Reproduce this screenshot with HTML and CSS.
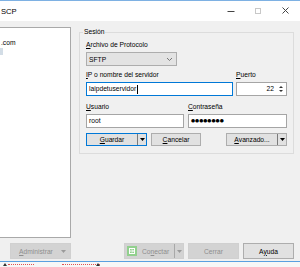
FILE: index.html
```html
<!DOCTYPE html>
<html lang="es">
<head>
<meta charset="utf-8">
<title>WinSCP</title>
<link rel="stylesheet" href="styles.css">
</head>
<body>
<div class="window">
  <div class="titlebar">
    <span class="title">SCP</span>
    <div class="caption">
      <span class="cbtn"><svg width="27" height="19" viewBox="0 0 27 19"><line x1="9.5" y1="9.5" x2="16.5" y2="9.5" stroke="#444" stroke-width="1"/></svg></span>
      <span class="cbtn"><svg width="27" height="19" viewBox="0 0 27 19"><rect x="10.5" y="6.5" width="5" height="5" fill="none" stroke="#c8c8c8" stroke-width="1"/></svg></span>
      <span class="cbtn"><svg width="27" height="19" viewBox="0 0 27 19"><path d="M10.5 5.5 L16.5 11.5 M16.5 5.5 L10.5 11.5" stroke="#444" stroke-width="1" fill="none"/></svg></span>
    </div>
  </div>
  <div class="client">
    <div class="main">
      <div class="tree">
        <div class="item">.com</div>
        <div class="item"><span class="selbar"></span></div>
      </div>
      <fieldset class="group">
        <legend>Sesión</legend>
        <div class="lbl"><u>A</u>rchivo de Protocolo</div>
        <div class="combo">
          <span>SFTP</span>
          <svg width="7" height="5" viewBox="0 0 7 5"><path d="M1 1 L3.5 3.5 L6 1" stroke="#777" stroke-width="1" fill="none"/></svg>
        </div>
        <div class="row r2">
          <div class="col ip">
            <div class="lbl"><u>I</u>P o nombre del servidor</div>
            <div class="input focus">laipdetuservidor<span class="caret"></span></div>
          </div>
          <div class="col port">
            <div class="lbl"><u>P</u>uerto</div>
            <div class="input num">
              <span class="val">22</span>
              <svg class="spin" width="8" height="12" viewBox="0 0 8 12"><path d="M2 5 L4 3 L6 5 Z M2 7 L4 9 L6 7 Z" fill="#333"/></svg>
            </div>
          </div>
        </div>
        <div class="row r3">
          <div class="col user">
            <div class="lbl"><u>U</u>suario</div>
            <div class="input">root</div>
          </div>
          <div class="col pass">
            <div class="lbl"><u>C</u>ontraseña</div>
            <div class="input dots">●●●●●●●●</div>
          </div>
        </div>
        <div class="row r4">
          <div class="btn split default guardar"><span class="bl"><u>G</u>uardar</span><span class="arr"><svg width="5" height="3" viewBox="0 0 5 3"><path d="M0 0 H5 L2.5 3 Z" fill="#000"/></svg></span></div>
          <div class="btn cancelar"><span class="bl"><u>C</u>ancelar</span></div>
          <div class="btn split avanzado"><span class="bl"><u>A</u>vanzado...</span><span class="arr"><svg width="5" height="3" viewBox="0 0 5 3"><path d="M0 0 H5 L2.5 3 Z" fill="#000"/></svg></span></div>
        </div>
      </fieldset>
    </div>
    <div class="actions">
      <div class="btn big disabled admin"><span class="bl"><u>A</u>dministrar</span><svg class="darr" width="5" height="3" viewBox="0 0 5 3"><path d="M0 0 H5 L2.5 3 Z" fill="#9a9a9a"/></svg></div>
      <div class="btn big disabled split conectar">
        <span class="bl">
          <svg class="ico" width="10" height="10" viewBox="0 0 10 10"><rect x="0" y="0" width="10" height="10" fill="#92d08e"/><rect x="2.5" y="2.5" width="5" height="5" fill="none" stroke="#fff" stroke-width="1"/><path d="M3 5 H6.5 M5 3.5 L6.5 5 L5 6.5" stroke="#fff" stroke-width="1" fill="none"/></svg>
          <span>Co<u>n</u>ectar</span>
        </span>
        <span class="arr"><svg width="5" height="3" viewBox="0 0 5 3"><path d="M0 0 H5 L2.5 3 Z" fill="#9a9a9a"/></svg></span>
      </div>
      <div class="btn big disabled cerrar"><span class="bl">Cerrar</span></div>
      <div class="btn big ayuda"><span class="bl">A<u>y</u>uda</span></div>
    </div>
  </div>
  <div class="strip">
    <span class="tri"></span><span class="red r1"></span><span class="red r2x"></span><span class="tri t2"></span>
  </div>
</div>
</body>
</html>
```
FILE: styles.css
```css
* { box-sizing: border-box; }
html, body { margin: 0; padding: 0; }
body {
  width: 300px;
  height: 267px;
  overflow: hidden;
  background: #fff;
  font-family: "Liberation Sans", Arial, sans-serif;
  font-size: 6.7px;
  color: #000;
}
u { text-decoration-thickness: 1px; text-underline-offset: 1px; }

.window {
  border-top: 1px solid #7eb1e3;
}
.titlebar {
  height: 20px;
  background: #fff;
  display: flex;
  align-items: center;
}
.title {
  font-size: 7.6px;
  margin-left: 1px;
  color: #000;
}
.caption {
  margin-left: auto;
  margin-right: 1px;
  display: flex;
}
.cbtn { width: 27px; height: 19px; display: block; }
.cbtn svg { display: block; }

.client {
  background: #f0f0f0;
  padding-top: 6px;
  border-bottom: 1px solid #5aa0e0;
  height: 241px;
}
.main {
  display: flex;
  align-items: flex-start;
}
.tree {
  width: 71px;
  height: 211px;
  background: #fff;
  border: 1px solid #a9a9a9;
  border-left: none;
  padding-top: 11px;
}
.item { height: 8px; line-height: 8px; white-space: nowrap; padding-left: 1px; }
.selbar { display: block; width: 3px; height: 7px; margin-top: 1px; margin-left: -1px; background: #d3dde6; }

.group {
  margin: 1px 0 0 8px;
  width: 215px;
  border: 1px solid #dcdcdc;
  padding: 5px 6px 7px 6px;
  min-width: 0;
}
.group legend {
  padding: 0 1px;
  margin-left: -3px;
  line-height: 8px;
  font-size: 6.7px;
}
.lbl { height: 8px; line-height: 8px; white-space: nowrap; }
.combo {
  margin-top: 3px;
  width: 91px;
  height: 14px;
  background: #e3e3e3;
  border: 1px solid #adadad;
  display: flex;
  align-items: center;
  justify-content: space-between;
  padding: 0 3px 0 2px;
}
.row { display: flex; }
.r2 { margin-top: 5px; gap: 3px; }
.r3 { margin-top: 7px; gap: 4px; }
.r4 { margin-top: 5px; }
.col { display: flex; flex-direction: column; gap: 3px; }
.ip { width: 147px; }
.port { width: 51px; }
.user { width: 98px; }
.pass { width: 99px; }
.input {
  height: 14px;
  background: #fff;
  border: 1px solid #a5a5a5;
  line-height: 12px;
  padding-left: 2px;
  display: flex;
  align-items: center;
  white-space: nowrap;
}
.input.focus { border-color: #0078d7; }
.caret { display: inline-block; width: 1px; height: 9px; background: #000; margin-left: 1px; }
.input.num { justify-content: flex-end; padding-right: 1px; }
.val { margin-right: 3px; }
.spin { display: block; }
.input.dots { font-size: 4.7px; letter-spacing: 0; font-family: "DejaVu Sans", sans-serif; }

.btn {
  height: 13px;
  background: #e1e1e1;
  border: 1px solid #adadad;
  display: flex;
  align-items: center;
  white-space: nowrap;
}
.btn .bl { flex: 1; text-align: center; display: flex; justify-content: center; align-items: center; }
.btn .arr {
  width: 9px;
  align-self: stretch;
  border-left: 1px solid #7a7a7a;
  display: flex;
  align-items: center;
  justify-content: center;
}
.btn .arr svg { display: block; }
.btn.default { border-color: #0078d7; }
.guardar { width: 61px; }
.cancelar { width: 50px; margin-left: 4px; }
.avanzado { width: 61px; margin-left: auto; }

.actions {
  display: flex;
  margin-top: 5px;
}
.btn.big { height: 16px; }
.btn.disabled { background: #d3d3d3; border-color: #d0d0d0; color: #8e8e8e; }
.btn.disabled .arr { border-left-color: #a8a8a8; }
.admin { width: 61px; margin-left: 10px; padding-right: 4px; }
.admin .bl { justify-content: flex-start; padding-left: 8px; }
.darr { display: block; }
.conectar { width: 60px; margin-left: 53px; }
.conectar .bl { justify-content: flex-start; padding-left: 2px; gap: 5px; }
.ico { display: block; }
.cerrar { width: 51px; margin-left: 4px; }
.ayuda { width: 51px; margin-left: 4px; }

.strip {
  height: 5px;
  background: #f7f7f7;
  display: flex;
  align-items: center;
}
.tri {
  width: 0; height: 0;
  border-left: 2px solid transparent;
  border-right: 2px solid transparent;
  border-bottom: 3px solid #333;
  margin-left: 3px;
}
.red { height: 1px; border-top: 1px dotted #e05050; }
.r1 { width: 26px; margin-left: 1px; }
.r2x { width: 38px; margin-left: 28px; }
.t2 { margin-left: -4px; }
```
